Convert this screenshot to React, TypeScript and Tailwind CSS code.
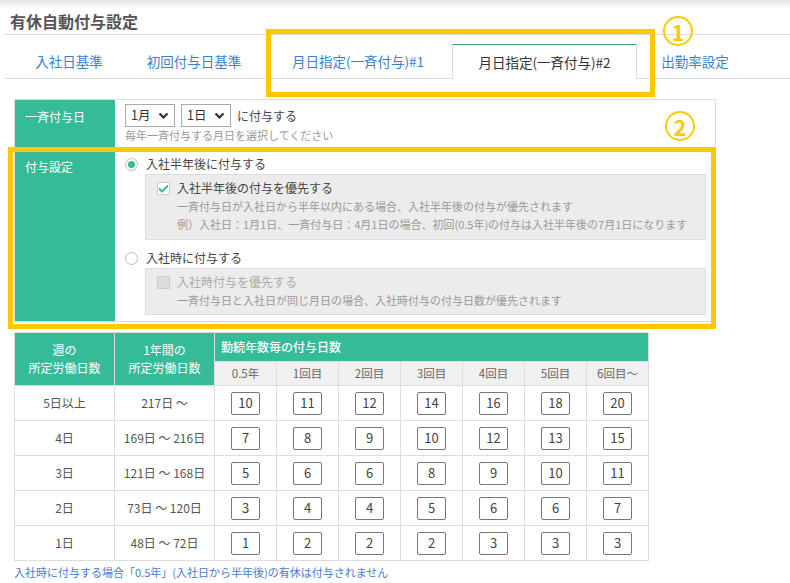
import React from "react";

const tabs = [
  { label: "入社日基準", active: false, w: "w-[110px]" },
  { label: "初回付与日基準", active: false, w: "w-[140px]" },
  { label: "月日指定(一斉付与)#1", active: false, w: "w-[188px]" },
  { label: "月日指定(一斉付与)#2", active: true, w: "w-[185px]" },
  { label: "出勤率設定", active: false, w: "w-[116px]" },
];

const headers = ["0.5年", "1回目", "2回目", "3回目", "4回目", "5回目", "6回目～"];

const rows = [
  { week: "5日以上", year: "217日 ～", days: [10, 11, 12, 14, 16, 18, 20] },
  { week: "4日", year: "169日 ～ 216日", days: [7, 8, 9, 10, 12, 13, 15] },
  { week: "3日", year: "121日 ～ 168日", days: [5, 6, 6, 8, 9, 10, 11] },
  { week: "2日", year: "73日 ～ 120日", days: [3, 4, 4, 5, 6, 6, 7] },
  { week: "1日", year: "48日 ～ 72日", days: [1, 2, 2, 2, 3, 3, 3] },
];

const Chevron = () => (
  <svg width="11" height="8" viewBox="0 0 11 8" className="ml-auto">
    <path d="M1.5 1.5 L5.5 5.5 L9.5 1.5" fill="none" stroke="#333" strokeWidth="2.2" />
  </svg>
);

const FakeSelect = ({ value }: { value: string }) => (
  <div className="flex items-center w-[50px] h-[23px] border border-[#aaa] bg-white pl-[5px] pr-[5px] text-[12.5px] text-[#333]">
    <span>{value}</span>
    <Chevron />
  </div>
);

const Annotation = ({ n, className }: { n: string; className: string }) => (
  <div
    className={`absolute w-[30px] h-[30px] rounded-full border-2 border-[#ffc800] flex items-center justify-center text-[#ffc800] text-[22px] font-bold leading-none ${className}`}
  >
    {n}
  </div>
);

export default function App() {
  return (
    <div
      className="relative w-[790px] h-[583px] overflow-hidden bg-white text-[#444]"
      style={{ fontFamily: '"Noto Sans CJK JP", "Noto Sans", sans-serif' }}
    >
      <div className="h-[8px] bg-gradient-to-b from-[#e4e4e4] to-white" />
      <div className="ml-[4px] h-[27px] flex items-center pl-[6px] border-b border-[#ddd]">
        <h1 className="text-[16px] font-bold text-[#555]">有休自動付与設定</h1>
      </div>

      {/* tabs */}
      <div className="ml-[4px] h-[44px] flex items-end pl-[10px] border-b border-[#ddd]">
        {tabs.map((t) =>
          t.active ? (
            <div
              key={t.label}
              className={`${t.w} h-[35px] -mb-px flex items-center justify-center bg-white border border-b-0 border-[#ddd] border-t-[#3a9e85] text-[13.5px] text-[#333]`}
            >
              {t.label}
            </div>
          ) : (
            <div
              key={t.label}
              className={`${t.w} h-[34px] flex items-center justify-center text-[13.5px] text-[#3b7ed6]`}
            >
              {t.label}
            </div>
          )
        )}
      </div>

      {/* settings */}
      <div className="mt-[20px] ml-[14px] w-[702px] border border-[#ddd]">
        <div className="flex h-[48px] border-b border-[#ddd]">
          <div className="w-[100px] shrink-0 bg-[#36bb98] text-white text-[12px] leading-[18px] pl-[10px] pt-[8px]">
            一斉付与日
          </div>
          <div className="pl-[10px] pt-[4px]">
            <div className="flex items-center gap-[6px]">
              <FakeSelect value="1月" />
              <FakeSelect value="1日" />
              <span className="text-[12px] text-[#444]">に付与する</span>
            </div>
            <div className="text-[11px] leading-[14px] text-[#999] mt-[1px]">
              毎年一斉付与する月日を選択してください
            </div>
          </div>
        </div>
        <div className="flex h-[173px]">
          <div className="w-[100px] shrink-0 bg-[#36bb98] text-white text-[12px] leading-[18px] pl-[10px] pt-[10px]">
            付与設定
          </div>
          <div className="flex-1 pl-[10px] pr-[9px] pt-[7px]">
            <div className="flex items-center h-[18px] text-[12px] text-[#444]">
              <span className="w-[13px] h-[13px] rounded-full border border-[#bbb] bg-white flex items-center justify-center">
                <span className="w-[7px] h-[7px] rounded-full bg-[#36bb98]" />
              </span>
              <span className="ml-[8px]">入社半年後に付与する</span>
            </div>
            <div className="mt-[1px] ml-[20px] h-[66px] border border-[#ddd] bg-[#ececec] pl-[11px] pt-[4px]">
              <div className="flex items-center h-[18px] text-[12px] text-[#444]">
                <span className="w-[13px] h-[13px] border border-[#ccc] bg-white flex items-center justify-center">
                  <svg width="11" height="9" viewBox="0 0 11 9">
                    <path d="M1 4.5 L4 7.5 L10 1.5" fill="none" stroke="#36bb98" strokeWidth="2" />
                  </svg>
                </span>
                <span className="ml-[7px]">入社半年後の付与を優先する</span>
              </div>
              <div className="pl-[20px] text-[11px] leading-[18px] text-[#999] whitespace-nowrap">
                <div>一斉付与日が入社日から半年以内にある場合、入社半年後の付与が優先されます</div>
                <div>例）入社日：1月1日、一斉付与日：4月1日の場合、初回(0.5年)の付与は入社半年後の7月1日になります</div>
              </div>
            </div>
            <div className="mt-[9px] flex items-center h-[18px] text-[12px] text-[#444]">
              <span className="w-[13px] h-[13px] rounded-full border border-[#bbb] bg-white" />
              <span className="ml-[8px]">入社時に付与する</span>
            </div>
            <div className="mt-[1px] ml-[20px] h-[47px] border border-[#ddd] bg-[#ececec] pl-[11px] pt-[4px]">
              <div className="flex items-center h-[18px] text-[12px] text-[#aaa]">
                <span className="w-[13px] h-[13px] border border-[#ccc] bg-[#ddd]" />
                <span className="ml-[7px]">入社時付与を優先する</span>
              </div>
              <div className="pl-[20px] text-[11px] leading-[18px] text-[#999] whitespace-nowrap">
                一斉付与日と入社日が同じ月日の場合、入社時付与の付与日数が優先されます
              </div>
            </div>
          </div>
        </div>
      </div>

      {/* table */}
      <table className="mt-[10px] ml-[14px] w-[634px] table-fixed border-collapse text-[12px]">
        <colgroup>
          <col className="w-[100px]" />
          <col className="w-[100px]" />
          {headers.map((h) => (
            <col key={h} className="w-[62px]" />
          ))}
        </colgroup>
        <thead>
          <tr className="h-[29px]">
            <th rowSpan={2} className="bg-[#36bb98] text-white font-normal border border-[#ddd] leading-[18px]">
              週の<br />所定労働日数
            </th>
            <th rowSpan={2} className="bg-[#36bb98] text-white font-normal border border-[#ddd] leading-[18px]">
              1年間の<br />所定労働日数
            </th>
            <th colSpan={7} className="bg-[#36bb98] text-white font-medium text-left pl-[6px] border border-[#ddd]">
              勤続年数毎の付与日数
            </th>
          </tr>
          <tr className="h-[24px]">
            {headers.map((h) => (
              <th key={h} className="bg-[#f0f0f0] text-[#666] font-normal text-[11.5px] border border-[#ddd]">
                {h}
              </th>
            ))}
          </tr>
        </thead>
        <tbody>
          {rows.map((r) => (
            <tr key={r.week} className="h-[35px]">
              <td className="border border-[#ddd] text-center text-[#555]">{r.week}</td>
              <td className="border border-[#ddd] text-center text-[#555]">{r.year}</td>
              {r.days.map((d, i) => (
                <td key={i} className="border border-[#ddd]">
                  <div className="mx-auto w-[29px] h-[23px] border border-[#777] rounded-[2px] flex items-center justify-center text-[13px] text-[#444]">
                    {d}
                  </div>
                </td>
              ))}
            </tr>
          ))}
        </tbody>
      </table>
      <p className="mt-[3px] ml-[14px] text-[11px] leading-[16px] text-[#4a7bd0]">
        入社時に付与する場合「0.5年」(入社日から半年後)の有休は付与されません
      </p>

      {/* annotation overlays */}
      <div className="absolute left-[266px] top-[29px] w-[389px] h-[68px] border-[5px] border-[#ffc800]" />
      <div className="absolute left-[8px] top-[147px] w-[708px] h-[182px] border-[5px] border-[#ffc800]" />
      <Annotation n="1" className="left-[663px] top-[16px]" />
      <Annotation n="2" className="left-[665px] top-[111px]" />
    </div>
  );
}
